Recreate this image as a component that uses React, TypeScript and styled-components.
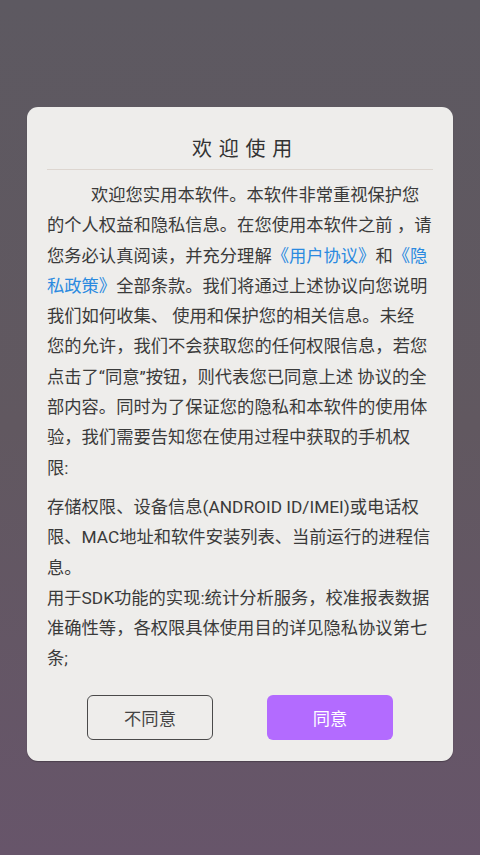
import React from "react";
import styled, { createGlobalStyle } from "styled-components";

const Global = createGlobalStyle`
  html, body { margin: 0; padding: 0; }
  body { font-family: Roboto, "Noto Sans CJK SC", sans-serif; }
`;

const Page = styled.div`
  width: 480px;
  height: 855px;
  box-sizing: border-box;
  padding-top: 107px;
  background: linear-gradient(180deg, #5d5961 0%, #615860 50%, #67556a 100%);
  display: flex;
  justify-content: center;
  align-items: flex-start;
`;

const Card = styled.div`
  width: 426px;
  height: 654px;
  box-sizing: border-box;
  background: #eeedeb;
  border-radius: 11px;
  box-shadow: 0 1px 1px rgba(0, 0, 0, 0.25);
  display: flex;
  flex-direction: column;
  padding-bottom: 21px;
`;

const Title = styled.div`
  margin-top: 28px;
  height: 28px;
  line-height: 28px;
  text-align: center;
  font-size: 20px;
  letter-spacing: 6.7px;
  padding-left: 11px;
  color: #333333;
`;

const Divider = styled.div`
  margin: 6px 20px 0;
  height: 1px;
  background: #ddd6d0;
`;

const Body = styled.div`
  margin: 10px 20px 0;
  font-size: 17.3px;
  line-height: 30.3px;
  color: #3a3a3a;
`;

const Paragraph = styled.div<{ $gap?: number }>`
  margin-top: ${(p) => p.$gap ?? 0}px;
`;

const Line = styled.div<{ $indent?: number }>`
  white-space: pre;
  text-indent: ${(p) => p.$indent ?? 0}px;
`;

const Link = styled.span`
  color: #2b8ae0;
`;

const Buttons = styled.div`
  margin-top: auto;
  display: flex;
  justify-content: center;
  gap: 54px;
`;

const Button = styled.button<{ $primary?: boolean }>`
  width: 126px;
  height: 45px;
  box-sizing: border-box;
  border-radius: 6px;
  font-family: Roboto, "Noto Sans CJK SC", sans-serif;
  font-size: 17.3px;
  padding: 0;
  cursor: pointer;
  border: ${(p) => (p.$primary ? "none" : "1.5px solid #4a4a4a")};
  background: ${(p) => (p.$primary ? "#b36bff" : "transparent")};
  color: ${(p) => (p.$primary ? "#ffffff" : "#444444")};
`;

export default function App() {
  return (
    <>
      <Global />
      <Page>
        <Card>
          <Title>欢迎使用</Title>
          <Divider />
          <Body>
            <Paragraph>
              <Line $indent={44}>欢迎您实用本软件。本软件非常重视保护您</Line>
              <Line>的个人权益和隐私信息。在您使用本软件之前 ，请</Line>
              <Line>
                您务必认真阅读，并充分理解<Link>《用户协议》</Link>和<Link>《隐</Link>
              </Line>
              <Line>
                <Link>私政策》</Link>全部条款。我们将通过上述协议向您说明
              </Line>
              <Line>我们如何收集、 使用和保护您的相关信息。未经</Line>
              <Line>您的允许，我们不会获取您的任何权限信息，若您</Line>
              <Line>点击了“同意”按钮，则代表您已同意上述 协议的全</Line>
              <Line>部内容。同时为了保证您的隐私和本软件的使用体</Line>
              <Line>验，我们需要告知您在使用过程中获取的手机权</Line>
              <Line>限:</Line>
            </Paragraph>
            <Paragraph $gap={9}>
              <Line>存储权限、设备信息(ANDROID ID/IMEI)或电话权</Line>
              <Line>限、MAC地址和软件安装列表、当前运行的进程信</Line>
              <Line>息。</Line>
              <Line>用于SDK功能的实现:统计分析服务，校准报表数据</Line>
              <Line>准确性等，各权限具体使用目的详见隐私协议第七</Line>
              <Line>条;</Line>
            </Paragraph>
          </Body>
          <Buttons>
            <Button>不同意</Button>
            <Button $primary>同意</Button>
          </Buttons>
        </Card>
      </Page>
    </>
  );
}
